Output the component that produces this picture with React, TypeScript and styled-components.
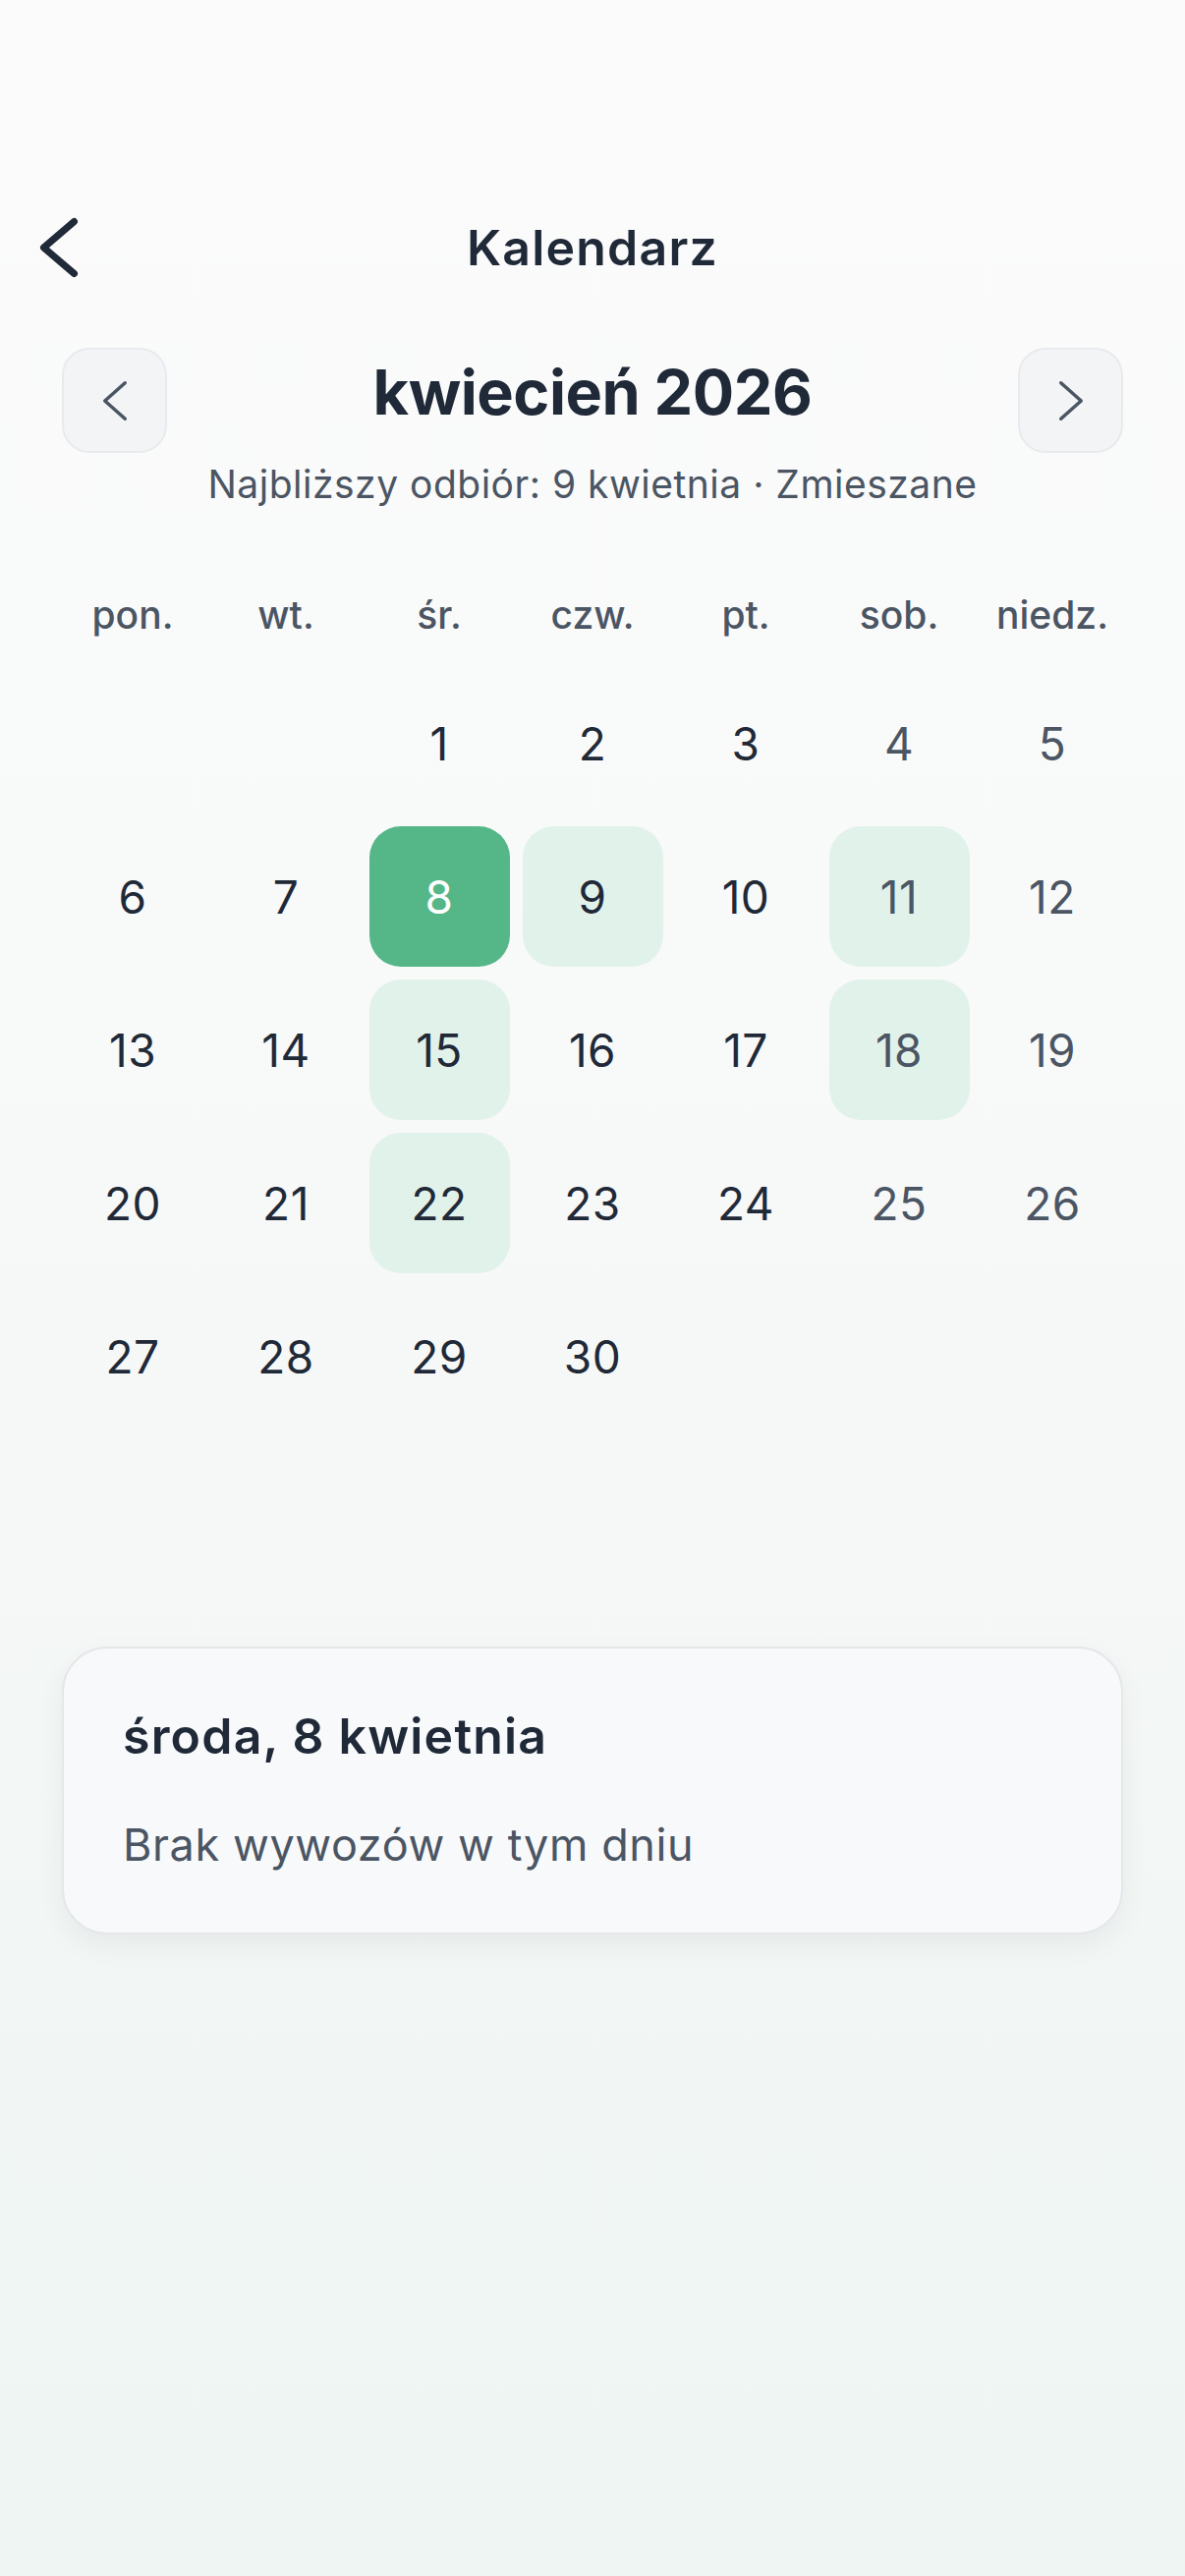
import React from 'react';
import styled, { createGlobalStyle } from 'styled-components';

const GlobalStyle = createGlobalStyle`
  html, body {
    margin: 0;
    padding: 0;
  }
  body {
    font-family: Inter, "Noto Sans", "Liberation Sans", sans-serif;
    color: #1f2937;
    background: #f4f7f6;
  }
`;

const S = {
  Page: styled.div`
    min-height: 2622px;
    box-sizing: border-box;
    padding: 197px 0 0;
    display: flex;
    flex-direction: column;
    background: linear-gradient(180deg, #fbfbfb 0%, #f8f9f9 40%, #eef5f2 100%);
  `,
  Header: styled.div`
    height: 110px;
    position: relative;
    display: flex;
    align-items: center;
    justify-content: center;
  `,
  BackButton: styled.button`
    position: absolute;
    left: 36px;
    top: 50%;
    transform: translateY(-50%);
    border: none;
    background: transparent;
    padding: 4px;
    display: flex;
    cursor: pointer;
  `,
  Title: styled.h1`
    margin: 0;
    font-size: 50px;
    font-weight: 600;
    letter-spacing: 1.2px;
    color: #1f2937;
  `,
  Content: styled.div`
    padding: 0 63px;
    display: flex;
    flex-direction: column;
  `,
  MonthRow: styled.div`
    margin-top: 47px;
    display: flex;
    align-items: center;
    justify-content: space-between;
  `,
  NavButton: styled.button`
    width: 107px;
    height: 107px;
    box-sizing: border-box;
    border-radius: 28px;
    border: 2px solid #e8eaee;
    background: #f3f4f6;
    display: flex;
    align-items: center;
    justify-content: center;
    padding: 0;
    cursor: pointer;
  `,
  MonthTitle: styled.h2`
    margin: 0 0 18px;
    font-size: 63px;
    font-weight: 700;
    letter-spacing: -0.5px;
    color: #1f2937;
  `,
  Subtitle: styled.div`
    margin-top: 9px;
    text-align: center;
    font-size: 39px;
    line-height: 46px;
    letter-spacing: 0.5px;
    color: #4b5563;
  `,
  Weekdays: styled.div`
    margin-top: 85px;
    display: grid;
    grid-template-columns: repeat(7, 143px);
    column-gap: 13px;
    justify-content: center;
  `,
  Weekday: styled.div`
    text-align: center;
    font-size: 39px;
    line-height: 50px;
    font-weight: 500;
    color: #4b5563;
  `,
  Grid: styled.div`
    margin-top: 34px;
    display: grid;
    grid-template-columns: repeat(7, 143px);
    grid-auto-rows: 143px;
    gap: 13px;
    justify-content: center;
  `,
  Day: styled.div<{ $variant: 'none' | 'selected' | 'pickup'; $weekend: boolean }>`
    border-radius: 32px;
    display: flex;
    align-items: center;
    justify-content: center;
    font-size: 46px;
    font-weight: 400;
    letter-spacing: 0.5px;
    background: ${p =>
      p.$variant === 'selected' ? '#55b787' : p.$variant === 'pickup' ? '#e1f2eb' : 'transparent'};
    color: ${p => (p.$variant === 'selected' ? '#ffffff' : p.$weekend ? '#4b5563' : '#1f2937')};
  `,
  Card: styled.div`
    margin-top: 224px;
    box-sizing: border-box;
    border: 2px solid #e5e7eb;
    border-radius: 46px;
    background: #f8f9fb;
    padding: 61px 60px 62px;
    box-shadow: 0 10px 30px rgba(17, 24, 39, 0.06);
    display: flex;
    flex-direction: column;
    gap: 56px;
  `,
  CardTitle: styled.div`
    font-size: 50px;
    line-height: 56px;
    font-weight: 600;
    letter-spacing: 1.2px;
    color: #1f2937;
  `,
  CardText: styled.div`
    font-size: 45px;
    line-height: 54px;
    letter-spacing: 0.6px;
    color: #4b5563;
  `,
};

const WEEKDAYS = ['pon.', 'wt.', 'śr.', 'czw.', 'pt.', 'sob.', 'niedz.'];
const PICKUPS = [9, 11, 15, 18, 22];
const SELECTED = 8;
const OFFSET = 2; // 1 kwietnia 2026 = środa

const Chevron = ({ dir, color, w, h, stroke }: { dir: 'left' | 'right'; color: string; w: number; h: number; stroke: number }) => {
  const pad = stroke / 2 + 1;
  const pts =
    dir === 'left'
      ? `${w - pad},${pad} ${pad},${h / 2} ${w - pad},${h - pad}`
      : `${pad},${pad} ${w - pad},${h / 2} ${pad},${h - pad}`;
  return (
    <svg width={w} height={h} viewBox={`0 0 ${w} ${h}`} fill="none">
      <polyline points={pts} stroke={color} strokeWidth={stroke} strokeLinecap="round" strokeLinejoin="round" />
    </svg>
  );
};

const App = () => {
  const cells: (number | null)[] = [];
  for (let i = 0; i < OFFSET; i++) cells.push(null);
  for (let d = 1; d <= 30; d++) cells.push(d);

  return (
    <>
      <GlobalStyle />
      <S.Page>
        <S.Header>
          <S.BackButton aria-label="Wstecz">
            <Chevron dir="left" color="#1f2937" w={40} h={62} stroke={7} />
          </S.BackButton>
          <S.Title>Kalendarz</S.Title>
        </S.Header>
        <S.Content>
          <S.MonthRow>
            <S.NavButton aria-label="Poprzedni miesiąc">
              <Chevron dir="left" color="#4b5563" w={26} h={42} stroke={3.5} />
            </S.NavButton>
            <S.MonthTitle>kwiecień 2026</S.MonthTitle>
            <S.NavButton aria-label="Następny miesiąc">
              <Chevron dir="right" color="#4b5563" w={26} h={42} stroke={3.5} />
            </S.NavButton>
          </S.MonthRow>
          <S.Subtitle>Najbliższy odbiór: 9 kwietnia · Zmieszane</S.Subtitle>
          <S.Weekdays>
            {WEEKDAYS.map(w => (
              <S.Weekday key={w}>{w}</S.Weekday>
            ))}
          </S.Weekdays>
          <S.Grid>
            {cells.map((d, idx) => {
              const col = idx % 7;
              const variant = d === SELECTED ? 'selected' : d !== null && PICKUPS.includes(d) ? 'pickup' : 'none';
              return (
                <S.Day key={idx} $variant={variant} $weekend={col >= 5}>
                  {d}
                </S.Day>
              );
            })}
          </S.Grid>
          <S.Card>
            <S.CardTitle>środa, 8 kwietnia</S.CardTitle>
            <S.CardText>Brak wywozów w tym dniu</S.CardText>
          </S.Card>
        </S.Content>
      </S.Page>
    </>
  );
};

export default App;
